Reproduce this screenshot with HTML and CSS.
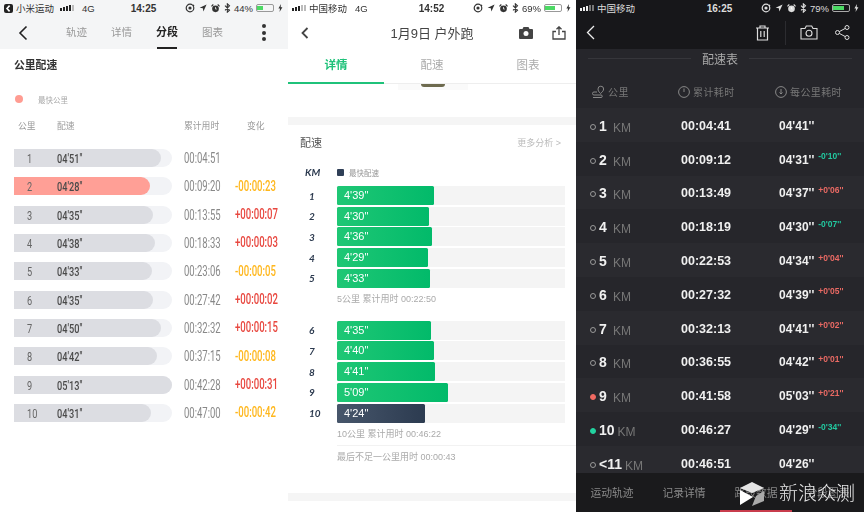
FILE: index.html
```html
<!DOCTYPE html>
<html lang="zh-CN">
<head>
    <meta charset="UTF-8">
    <title>配速对比</title>
    <link rel="stylesheet" href="styles.css">
</head>
<body>
    <svg class="defs" width="0" height="0">
        <symbol id="i-lock" viewBox="0 0 10 10"><circle cx="5" cy="5" r="3.8" fill="none" stroke="currentColor" stroke-width="1.2"/><circle cx="5" cy="5" r="1.6" fill="currentColor"/><path d="M8 1.2l1.6 1.6-2 .4z" fill="currentColor"/></symbol>
        <symbol id="i-loc" viewBox="0 0 10 10"><path d="M9.5.5L.8 4.6l4 .7.7 4z" fill="currentColor"/></symbol>
        <symbol id="i-alarm" viewBox="0 0 10 10"><circle cx="5" cy="5.4" r="3.7" fill="currentColor"/><path d="M.5 2.6L2.6.6M9.5 2.6L7.4.6" stroke="currentColor" stroke-width="1.3"/><path d="M5 3.4v2.2h1.4" fill="none" stroke="#fff" stroke-width=".8"/></symbol>
        <symbol id="i-bt" viewBox="0 0 8 12"><path d="M1 3.2l5.4 5.4L3.8 11V1l2.6 2.4L1 8.8" fill="none" stroke="currentColor" stroke-width="1.3"/></symbol>
        <symbol id="i-bolt" viewBox="0 0 6 10"><path d="M3.6 0L.4 5.6h2L1.8 10l3.6-6H3.2z" fill="currentColor"/></symbol>
    </svg>

    <div class="shots">

        <!-- 小米运动 -->
        <section class="shot mi">
            <div class="mi-top">
                <div class="status">
                    <div class="status-left">
                        <span class="app-badge">
                            <svg width="9" height="9" viewBox="0 0 9 9"><path d="M5.6 1.6L3 4.5l2.6 2.9" fill="none" stroke="#fff" stroke-width="1.6"/></svg>
                        </span>
                        <span>小米运动</span>
                        <span class="signal"><i class="on"></i><i class="on"></i><i class="on"></i><i class="on"></i><i></i></span>
                        <span class="net">4G</span>
                    </div>
                    <div class="status-time">14:25</div>
                    <div class="status-right">
                        <svg class="si" width="10" height="10"><use href="#i-lock"/></svg>
                        <svg class="si" width="8" height="8"><use href="#i-loc"/></svg>
                        <svg class="si" width="9" height="9"><use href="#i-alarm"/></svg>
                        <svg class="si" width="7" height="10"><use href="#i-bt"/></svg>
                        <span>44%</span>
                        <span class="batt"><span class="batt-fill batt-44"></span></span>
                        <svg class="si" width="5" height="8"><use href="#i-bolt"/></svg>
                    </div>
                </div>
                <nav class="mi-nav">
                    <svg class="mi-back" width="10" height="16" viewBox="0 0 10 16"><path d="M8.5 1.5L2 8l6.5 6.5" fill="none" stroke="#222" stroke-width="1.6"/></svg>
                    <div class="mi-tabs">
                        <span>轨迹</span>
                        <span>详情</span>
                        <span class="on">分段</span>
                        <span>图表</span>
                    </div>
                    <div class="mi-more"><i></i><i></i><i></i></div>
                </nav>
            </div>
            <h2 class="mi-title">公里配速</h2>
            <div class="mi-legend"><i></i>最快公里</div>
            <div class="mi-head mi-grid">
                <span class="c-km">公里</span><span>配速</span><span>累计用时</span><span class="c-change">变化</span>
            </div>
            <div class="mi-rows">
                <div class="mi-row"><div class="mi-track"><div class="mi-fill" style="width:147px"><b>1</b><b class="pace">04'51"</b></div></div><span class="tot">00:04:51</span><span class="chg"></span></div>
                <div class="mi-row best"><div class="mi-track"><div class="mi-fill" style="width:136px"><b>2</b><b class="pace">04'28"</b></div></div><span class="tot">00:09:20</span><span class="chg down">-00:00:23</span></div>
                <div class="mi-row"><div class="mi-track"><div class="mi-fill" style="width:139px"><b>3</b><b class="pace">04'35"</b></div></div><span class="tot">00:13:55</span><span class="chg up">+00:00:07</span></div>
                <div class="mi-row"><div class="mi-track"><div class="mi-fill" style="width:141px"><b>4</b><b class="pace">04'38"</b></div></div><span class="tot">00:18:33</span><span class="chg up">+00:00:03</span></div>
                <div class="mi-row"><div class="mi-track"><div class="mi-fill" style="width:138px"><b>5</b><b class="pace">04'33"</b></div></div><span class="tot">00:23:06</span><span class="chg down">-00:00:05</span></div>
                <div class="mi-row"><div class="mi-track"><div class="mi-fill" style="width:139px"><b>6</b><b class="pace">04'35"</b></div></div><span class="tot">00:27:42</span><span class="chg up">+00:00:02</span></div>
                <div class="mi-row"><div class="mi-track"><div class="mi-fill" style="width:147px"><b>7</b><b class="pace">04'50"</b></div></div><span class="tot">00:32:32</span><span class="chg up">+00:00:15</span></div>
                <div class="mi-row"><div class="mi-track"><div class="mi-fill" style="width:143px"><b>8</b><b class="pace">04'42"</b></div></div><span class="tot">00:37:15</span><span class="chg down">-00:00:08</span></div>
                <div class="mi-row"><div class="mi-track"><div class="mi-fill" style="width:158px"><b>9</b><b class="pace">05'13"</b></div></div><span class="tot">00:42:28</span><span class="chg up">+00:00:31</span></div>
                <div class="mi-row"><div class="mi-track"><div class="mi-fill" style="width:137px"><b>10</b><b class="pace">04'31"</b></div></div><span class="tot">00:47:00</span><span class="chg down">-00:00:42</span></div>
            </div>
        </section>

        <!-- 咕咚 -->
        <section class="shot gd">
            <div class="status">
                <div class="status-left">
                    <span class="signal"><i class="on"></i><i class="on"></i><i class="on"></i><i></i><i></i></span>
                    <span>中国移动</span>
                    <span class="net">4G</span>
                </div>
                <div class="status-time">14:52</div>
                <div class="status-right">
                    <svg class="si" width="10" height="10"><use href="#i-lock"/></svg>
                    <svg class="si" width="8" height="8"><use href="#i-loc"/></svg>
                    <svg class="si" width="9" height="9"><use href="#i-alarm"/></svg>
                    <svg class="si" width="7" height="10"><use href="#i-bt"/></svg>
                    <span>69%</span>
                    <span class="batt"><span class="batt-fill batt-69"></span></span>
                    <svg class="si" width="5" height="8"><use href="#i-bolt"/></svg>
                </div>
            </div>
            <header class="gd-head">
                <svg width="8" height="12" viewBox="0 0 8 12"><path d="M6.5 1L1.5 6l5 5" fill="none" stroke="#444" stroke-width="1.8"/></svg>
                <h1>1月9日 户外跑</h1>
                <div class="gd-actions">
                    <svg width="14" height="12" viewBox="0 0 14 12"><path d="M4.5 0h5l1 2H13a1 1 0 011 1v8a1 1 0 01-1 1H1a1 1 0 01-1-1V3a1 1 0 011-1h2.500z" fill="#444"/><circle cx="7" cy="6.500" r="2.500" fill="#fff"/></svg>
                    <svg width="14" height="14" viewBox="0 0 14 14"><path d="M4 5.500H1v7.500h12V5.500h-3M7 9V1M4.500 3.200L7 .8l2.500 2.400" fill="none" stroke="#444" stroke-width="1.300"/></svg>
                </div>
            </header>
            <div class="gd-tabs">
                <span class="on">详情</span><span>配速</span><span>图表</span>
            </div>
            <div class="gd-card"><i></i></div>
            <div class="gd-band first"></div>
            <div class="gd-section-head">
                <h2>配速</h2>
                <span>更多分析 &gt;</span>
            </div>
            <div class="gd-legend">
                <em>KM</em>
                <span><i></i>最快配速</span>
            </div>
            <div class="gd-bars">
                <div class="gd-row"><em>1</em><div class="gd-track"><div class="gd-fill" style="width:97px">4'39"</div></div></div>
                <div class="gd-row"><em>2</em><div class="gd-track"><div class="gd-fill" style="width:92px">4'30"</div></div></div>
                <div class="gd-row"><em>3</em><div class="gd-track"><div class="gd-fill" style="width:95px">4'36"</div></div></div>
                <div class="gd-row"><em>4</em><div class="gd-track"><div class="gd-fill" style="width:91px">4'29"</div></div></div>
                <div class="gd-row"><em>5</em><div class="gd-track"><div class="gd-fill" style="width:93px">4'33"</div></div></div>
            </div>
            <p class="gd-note">5公里 累计用时 00:22:50</p>
            <div class="gd-bars second">
                <div class="gd-row"><em>6</em><div class="gd-track"><div class="gd-fill" style="width:94px">4'35"</div></div></div>
                <div class="gd-row"><em>7</em><div class="gd-track"><div class="gd-fill" style="width:97px">4'40"</div></div></div>
                <div class="gd-row"><em>8</em><div class="gd-track"><div class="gd-fill" style="width:98px">4'41"</div></div></div>
                <div class="gd-row"><em>9</em><div class="gd-track"><div class="gd-fill" style="width:111px">5'09"</div></div></div>
                <div class="gd-row"><em>10</em><div class="gd-track"><div class="gd-fill best" style="width:88px">4'24"</div></div></div>
            </div>
            <p class="gd-note">10公里 累计用时 00:46:22</p>
            <div class="gd-rule"></div>
            <p class="gd-note last">最后不足一公里用时 00:00:43</p>
            <div class="gd-band"></div>
        </section>

        <!-- 深色 -->
        <section class="shot dk">
            <div class="dk-top">
                <div class="status">
                    <div class="status-left">
                        <span class="signal"><i class="on"></i><i class="on"></i><i class="on"></i><i></i><i></i></span>
                        <span>中国移动</span>
                    </div>
                    <div class="status-time">16:25</div>
                    <div class="status-right">
                        <svg class="si" width="10" height="10"><use href="#i-lock"/></svg>
                        <svg class="si" width="8" height="8"><use href="#i-loc"/></svg>
                        <svg class="si dk-alarm" width="9" height="9"><use href="#i-alarm"/></svg>
                        <svg class="si" width="7" height="10"><use href="#i-bt"/></svg>
                        <span>79%</span>
                        <span class="batt"><span class="batt-fill batt-79"></span></span>
                        <svg class="si" width="5" height="8"><use href="#i-bolt"/></svg>
                    </div>
                </div>
                <nav class="dk-nav">
                    <svg width="9" height="15" viewBox="0 0 9 15"><path d="M8 1L1.500 7.500 8 14" fill="none" stroke="#eee" stroke-width="1.300"/></svg>
                    <div class="dk-actions">
                        <svg width="15" height="16" viewBox="0 0 15 16"><path d="M1 3h13M5 3V1h5v2M2.500 3v12h10V3M5.800 6v6M9.200 6v6" fill="none" stroke="#ddd" stroke-width="1.200"/></svg>
                        <span class="dk-sep"></span>
                        <svg width="18" height="15" viewBox="0 0 18 15"><path d="M1 3.500h4l1.300-2.500h5.400L13 3.500h4V14H1z" fill="none" stroke="#ddd" stroke-width="1.100"/><circle cx="9" cy="8.300" r="3" fill="none" stroke="#ddd" stroke-width="1.100"/></svg>
                        <svg width="15" height="15" viewBox="0 0 15 15"><circle cx="2.500" cy="7.500" r="2" fill="none" stroke="#ddd"/><circle cx="12" cy="2.500" r="2" fill="none" stroke="#ddd"/><circle cx="12" cy="12.500" r="2" fill="none" stroke="#ddd"/><path d="M4.300 6.600l6-3.200M4.300 8.400l6 3.200" stroke="#ddd"/></svg>
                    </div>
                </nav>
            </div>
            <h2 class="dk-title"><span>配速表</span></h2>
            <div class="dk-head dk-grid">
                <span><svg width="13" height="13" viewBox="0 0 13 13"><path d="M8.500 8.500C6.500 6.500 6 5.500 6 4a2.800 2.800 0 015.600 0c0 1.500-1 2.800-3.100 4.500zM5 7H2a1.500 1.500 0 000 3h7a1 1 0 010 2.500H1" fill="none" stroke="#888" stroke-width="1"/></svg>公里</span>
                <span><svg width="12" height="12" viewBox="0 0 12 12"><circle cx="6" cy="6" r="5.400" fill="none" stroke="#888"/><path d="M6 2.500V6" stroke="#888"/></svg>累计耗时</span>
                <span><svg width="12" height="12" viewBox="0 0 12 12"><circle cx="6" cy="6" r="5.400" fill="none" stroke="#888"/><path d="M6 3v4M4.500 6.500L6 8l1.500-1.500" fill="none" stroke="#888"/></svg>每公里耗时</span>
            </div>
            <div class="dk-rows">
                <div class="dk-row dk-grid"><span class="km"><i class="dot"></i><b>1</b><small>KM</small></span><b class="time">00:04:41</b><span class="pace"><b>04'41''</b></span></div>
                <div class="dk-row dk-grid"><span class="km"><i class="dot"></i><b>2</b><small>KM</small></span><b class="time">00:09:12</b><span class="pace"><b>04'31''</b><sup class="fast">-0'10''</sup></span></div>
                <div class="dk-row dk-grid"><span class="km"><i class="dot"></i><b>3</b><small>KM</small></span><b class="time">00:13:49</b><span class="pace"><b>04'37''</b><sup class="slow">+0'06''</sup></span></div>
                <div class="dk-row dk-grid"><span class="km"><i class="dot"></i><b>4</b><small>KM</small></span><b class="time">00:18:19</b><span class="pace"><b>04'30''</b><sup class="fast">-0'07''</sup></span></div>
                <div class="dk-row dk-grid"><span class="km"><i class="dot"></i><b>5</b><small>KM</small></span><b class="time">00:22:53</b><span class="pace"><b>04'34''</b><sup class="slow">+0'04''</sup></span></div>
                <div class="dk-row dk-grid"><span class="km"><i class="dot"></i><b>6</b><small>KM</small></span><b class="time">00:27:32</b><span class="pace"><b>04'39''</b><sup class="slow">+0'05''</sup></span></div>
                <div class="dk-row dk-grid"><span class="km"><i class="dot"></i><b>7</b><small>KM</small></span><b class="time">00:32:13</b><span class="pace"><b>04'41''</b><sup class="slow">+0'02''</sup></span></div>
                <div class="dk-row dk-grid"><span class="km"><i class="dot"></i><b>8</b><small>KM</small></span><b class="time">00:36:55</b><span class="pace"><b>04'42''</b><sup class="slow">+0'01''</sup></span></div>
                <div class="dk-row dk-grid"><span class="km"><i class="dot red"></i><b>9</b><small>KM</small></span><b class="time">00:41:58</b><span class="pace"><b>05'03''</b><sup class="slow">+0'21''</sup></span></div>
                <div class="dk-row dk-grid"><span class="km"><i class="dot green"></i><b>10</b><small>KM</small></span><b class="time">00:46:27</b><span class="pace"><b>04'29''</b><sup class="fast">-0'34''</sup></span></div>
                <div class="dk-row dk-grid"><span class="km"><i class="dot"></i><b>&lt;11</b><small>KM</small></span><b class="time">00:46:51</b><span class="pace"><b>04'26''</b></span></div>
            </div>
            <footer class="dk-foot">
                <span>运动轨迹</span>
                <span>记录详情</span>
                <span class="on">路段数据</span>
                <span>分段图表</span>
            </footer>
            <div class="watermark">
                <svg width="26" height="26" viewBox="0 0 26 26"><path d="M13 1l12 6-12 5L1 7z" fill="#e4e4e4"/><path d="M1 9l13 7-13 8z" fill="#fff"/><path d="M17 15l8-5v10l-12 5z" fill="#aaa"/></svg>
                <span>新浪众测</span>
            </div>
        </section>
    </div>
</body>
</html>
```

FILE: styles.css
```css
* {
    box-sizing: border-box;
}
html, body {
    margin: 0;
    height: 512px;
    overflow: hidden;
}
body {
    font-family: "Liberation Sans", "Noto Sans CJK SC", sans-serif;
    background: #fff;
}
h1, h2, p {
    margin: 0;
}
.defs {
    position: absolute;
}
.shots {
    display: flex;
    width: 864px;
    height: 512px;
    filter: blur(.3px);
}
.shot {
    position: relative;
    width: 288px;
    height: 512px;
    overflow: hidden;
    display: flex;
    flex-direction: column;
}

/* status bar */
.status {
    height: 16px;
    padding: 0 5px 0 4px;
    display: grid;
    grid-template-columns: 1fr auto 1fr;
    align-items: center;
    font-size: 9.500px;
    color: #333;
    flex-shrink: 0;
}
.status-left {
    display: flex;
    align-items: center;
    gap: 3px;
}
.status-time {
    font-size: 10px;
    font-weight: 700;
}
.status-right {
    display: flex;
    justify-content: flex-end;
    align-items: center;
    gap: 4px;
}
.status-right span {
    margin-left: -1px;
}
.si {
    color: #333;
    display: block;
}
.app-badge {
    width: 9px;
    height: 9px;
    border-radius: 2px;
    background: #222;
    display: block;
}
.app-badge svg {
    display: block;
}
.signal {
    display: flex;
    align-items: flex-end;
    gap: 1px;
    margin: 0 0 0 3px;
}
.gd .signal, .dk .signal {
    margin: 0;
}
.signal i {
    width: 2px;
    height: 6px;
    background: #bbb;
}
.signal i:nth-child(1) { height: 3px; }
.signal i:nth-child(2) { height: 4px; }
.signal i:nth-child(3) { height: 5px; }
.signal i.on {
    background: #222;
}
.net {
    margin-left: 5px;
}
.batt {
    width: 18px;
    height: 8px;
    border: 1px solid #999;
    border-radius: 2px;
    padding: 1px;
    display: block;
}
.batt-fill {
    display: block;
    height: 100%;
    background: #4cd964;
}
.batt-44 { width: 44%; }
.batt-69 { width: 69%; }
.batt-79 { width: 79%; }

/* left: 小米运动 */
.mi-top {
    height: 49px;
    background: #f4f5f6;
    flex-shrink: 0;
}
.mi-nav {
    height: 33px;
    display: flex;
    align-items: center;
    padding: 0 22px 0 18px;
}
.mi-back {
    display: block;
}
.mi-tabs {
    flex: 1;
    display: flex;
    gap: 24px;
    padding-left: 38px;
    height: 33px;
    font-size: 10.500px;
    color: #999;
}
.mi-tabs span {
    line-height: 33px;
    height: 33px;
    position: relative;
}
.mi-tabs .on {
    color: #222;
    font-weight: 700;
    font-size: 11px;
}
.mi-tabs .on::after {
    content: "";
    position: absolute;
    left: 1px;
    right: 1px;
    bottom: 0;
    height: 2px;
    background: #222;
}
.mi-more {
    display: flex;
    flex-direction: column;
    gap: 2.500px;
}
.mi-more i {
    width: 4px;
    height: 4px;
    border-radius: 2px;
    background: #333;
}
.mi-title {
    font-size: 10.800px;
    font-weight: 700;
    color: #333;
    padding: 8px 0 0 14px;
    line-height: 16px;
}
.mi-legend {
    margin-top: 20px;
    padding-left: 15px;
    height: 12px;
    display: flex;
    align-items: center;
    font-size: 7.500px;
    color: #aaa;
}
.mi-legend i {
    width: 8px;
    height: 8px;
    border-radius: 4px;
    background: #ff9c92;
    margin-right: 15px;
}
.mi-grid {
    display: grid;
    grid-template-columns: 43px 127px 62px 1fr;
}
.mi-head {
    margin-top: 15px;
    padding-left: 14px;
    font-size: 8.800px;
    line-height: 12px;
    color: #999;
}
.mi-head .c-km {
    padding-left: 4px;
}
.mi-head .c-change {
    padding-left: 1px;
}
.mi-rows {
    margin-top: 17px;
    padding-left: 14px;
    display: flex;
    flex-direction: column;
    gap: 10.330px;
}
.mi-row {
    height: 18px;
    display: grid;
    grid-template-columns: 158px 63px 65px;
    align-items: center;
    font-family: "Roboto", sans-serif;
}
.mi-track {
    width: 158px;
    height: 18px;
    background: #f2f3f6;
    border-radius: 0 9px 9px 0;
}
.mi-fill {
    height: 18px;
    background: #dcdde2;
    border-radius: 0 9px 9px 0;
    padding-left: 13px;
    display: flex;
    align-items: center;
    font-size: 13.500px;
    color: #666;
    white-space: nowrap;
}
.mi-fill b {
    font-weight: 400;
    width: 30px;
    flex-shrink: 0;
    transform: scaleX(.68);
    transform-origin: left center;
}
.mi-fill b.pace {
    color: #4a4a4a;
    font-weight: 500;
    width: auto;
}
.mi-row.best .mi-fill {
    background: #ff9f96;
}
.tot, .chg {
    white-space: nowrap;
    transform-origin: left center;
}
.tot {
    font-size: 14px;
    color: #888;
    margin-left: 12px;
    transform: scaleX(.68);
}
.chg {
    font-size: 14.500px;
    font-weight: 500;
    transform: scaleX(.66);
}
.chg.up {
    color: #e8473f;
}
.chg.down {
    color: #ffb71c;
}

/* middle */
.gd-head {
    height: 33px;
    position: relative;
    display: flex;
    align-items: center;
    justify-content: center;
    flex-shrink: 0;
}
.gd-head > svg {
    position: absolute;
    left: 13px;
}
.gd-head h1 {
    font-size: 13px;
    font-weight: 400;
    color: #444;
}
.gd-actions {
    position: absolute;
    right: 10px;
    display: flex;
    align-items: center;
    gap: 19px;
}
.gd-actions svg {
    display: block;
}
.gd-tabs {
    height: 35px;
    display: grid;
    grid-template-columns: repeat(3, 1fr);
    font-size: 11.500px;
    line-height: 33px;
    text-align: center;
    color: #aaa;
    border-bottom: 1px solid #eee;
    flex-shrink: 0;
}
.gd-tabs .on {
    color: #1fc27a;
    font-weight: 700;
    border-bottom: 2px solid #1fc27a;
    height: 35px;
}
.gd-card {
    width: 70px;
    height: 6px;
    margin-left: 110px;
    background: #fafafa;
    display: flex;
    justify-content: center;
    flex-shrink: 0;
}
.gd-card i {
    width: 24px;
    height: 3px;
    background: #6d6a4e;
    border-radius: 0 0 12px 12px;
}
.gd-band {
    height: 8px;
    background: #f5f5f5;
    margin-top: 29px;
    flex-shrink: 0;
}
.gd-band.first {
    margin-top: 27px;
}
.gd-section-head {
    display: flex;
    justify-content: space-between;
    align-items: center;
    padding: 0 15px 0 12px;
    height: 34px;
    flex-shrink: 0;
}
.gd-section-head h2 {
    font-size: 11px;
    font-weight: 400;
    color: #555;
}
.gd-section-head span {
    font-size: 9px;
    color: #bbb;
}
.gd-legend {
    display: flex;
    align-items: center;
    height: 12px;
    margin-top: 7px;
    padding-left: 17px;
    flex-shrink: 0;
}
.gd-legend em, .gd-row em {
    font-style: italic;
    font-weight: 700;
    font-size: 10px;
    color: #2c3a4f;
    font-family: "Lato", "Liberation Sans", sans-serif;
}
.gd-legend em {
    width: 32px;
}
.gd-legend span {
    display: flex;
    align-items: center;
    font-size: 7.500px;
    color: #999;
}
.gd-legend i {
    width: 7px;
    height: 7px;
    background: #2f3f57;
    border-radius: 1px;
    margin-right: 5px;
}
.gd-bars {
    margin-top: 8px;
    display: flex;
    flex-direction: column;
    gap: 1.700px;
}
.gd-bars.second {
    margin-top: 15px;
}
.gd-row {
    height: 19px;
    display: flex;
    align-items: center;
}
.gd-row em {
    width: 49px;
    padding-left: 21px;
    font-size: 10px;
}
.gd-track {
    width: 228px;
    height: 19px;
    background: #f4f4f4;
}
.gd-fill {
    height: 19px;
    background: linear-gradient(90deg, #1fc775, #02ba6a);
    border-radius: 1.500px;
    padding-left: 7px;
    font-size: 11px;
    line-height: 19px;
    color: #fff;
}
.gd-fill.best {
    background: linear-gradient(90deg, #47566b, #2c3b50);
}
.gd-note {
    padding-left: 49px;
    margin-top: 4px;
    height: 14px;
    font-size: 9px;
    line-height: 14px;
    color: #aaa;
    flex-shrink: 0;
}
.gd-rule {
    height: 1px;
    margin: 4px 0 0 49px;
    background: #f2f2f2;
    flex-shrink: 0;
}
.gd-note.last {
    margin-top: 4px;
}

/* right */
.dk {
    background: #26262b;
}
.dk-top {
    height: 49px;
    background: #17171a;
    flex-shrink: 0;
}
.dk .status, .dk .si {
    color: #ddd;
}
.dk .signal i {
    background: #777;
}
.dk .signal i.on {
    background: #eee;
}
.dk .batt {
    border-color: #aaa;
}
.dk-nav {
    height: 33px;
    padding: 0 14px 0 10px;
    display: flex;
    align-items: center;
    justify-content: space-between;
}
.dk-actions {
    display: flex;
    align-items: center;
}
.dk-actions svg {
    display: block;
}
.dk-sep {
    width: 1px;
    height: 24px;
    background: #2c2c30;
    margin: 0 14px 0 15px;
}
.dk-actions svg:last-child {
    margin-left: 17px;
}
.dk-title {
    height: 18px;
    padding: 0 12px;
    display: flex;
    align-items: center;
    gap: 11px;
    font-size: 12px;
    font-weight: 400;
    color: #aaa;
    flex-shrink: 0;
}
.dk-title::before, .dk-title::after {
    content: "";
    flex: 1;
    height: 1px;
    background: #36363b;
}
.dk-grid {
    display: grid;
    grid-template-columns: 91px 98px 1fr;
}
.dk-head {
    margin-top: 16px;
    height: 17px;
    padding-left: 16px;
    align-items: center;
    font-size: 10px;
    color: #777;
    letter-spacing: .4px;
    flex-shrink: 0;
    grid-template-columns: 86px 97px 1fr;
}
.dk-head span {
    display: flex;
    align-items: center;
    gap: 3px;
}
.dk-rows {
    margin-top: 8px;
}
.dk-row {
    height: 33.800px;
    padding-left: 14px;
    padding-top: 2px;
    align-items: center;
    color: #f0f0f0;
}
.dk-row:nth-child(odd) {
    background: #2a2a2f;
}
.km {
    display: flex;
    align-items: baseline;
    position: relative;
    padding-left: 9px;
}
.km b {
    font-size: 14px;
    min-width: 11px;
}
.km small {
    font-size: 12px;
    color: #777;
    margin-left: 3px;
    position: relative;
    top: 1px;
}
.dot {
    position: absolute;
    left: 0;
    top: 6px;
    width: 6px;
    height: 6px;
    border-radius: 3px;
    border: 1px solid #999;
}
.dot.red {
    background: #f06a62;
    border-color: #f06a62;
}
.dot.green {
    background: #22d3a0;
    border-color: #22d3a0;
}
.time {
    font-size: 12.500px;
}
.pace {
    display: flex;
    align-items: center;
}
.pace b {
    font-size: 12px;
}
.pace sup {
    font-size: 8.500px;
    font-weight: 700;
    margin: -7px 0 0 4px;
}
.fast {
    color: #22c9a0;
}
.slow {
    color: #ea6a64;
}
.dk-foot {
    position: absolute;
    left: 0;
    right: 0;
    bottom: 0;
    height: 39px;
    background: #1a1a1c;
    display: grid;
    grid-template-columns: 72px 72px 72px 72px;
    text-align: center;
    font-size: 10.800px;
    line-height: 40px;
    color: #888;
}
.dk-foot .on {
    border-bottom: 2px solid #c83c4c;
    height: 39px;
}
.watermark {
    position: absolute;
    right: 9px;
    bottom: 5px;
    display: flex;
    align-items: center;
    gap: 14px;
    font-size: 19px;
    font-weight: 300;
    line-height: 26px;
    color: rgba(255, 255, 255, .9);
}
.watermark svg {
    display: block;
}
```
